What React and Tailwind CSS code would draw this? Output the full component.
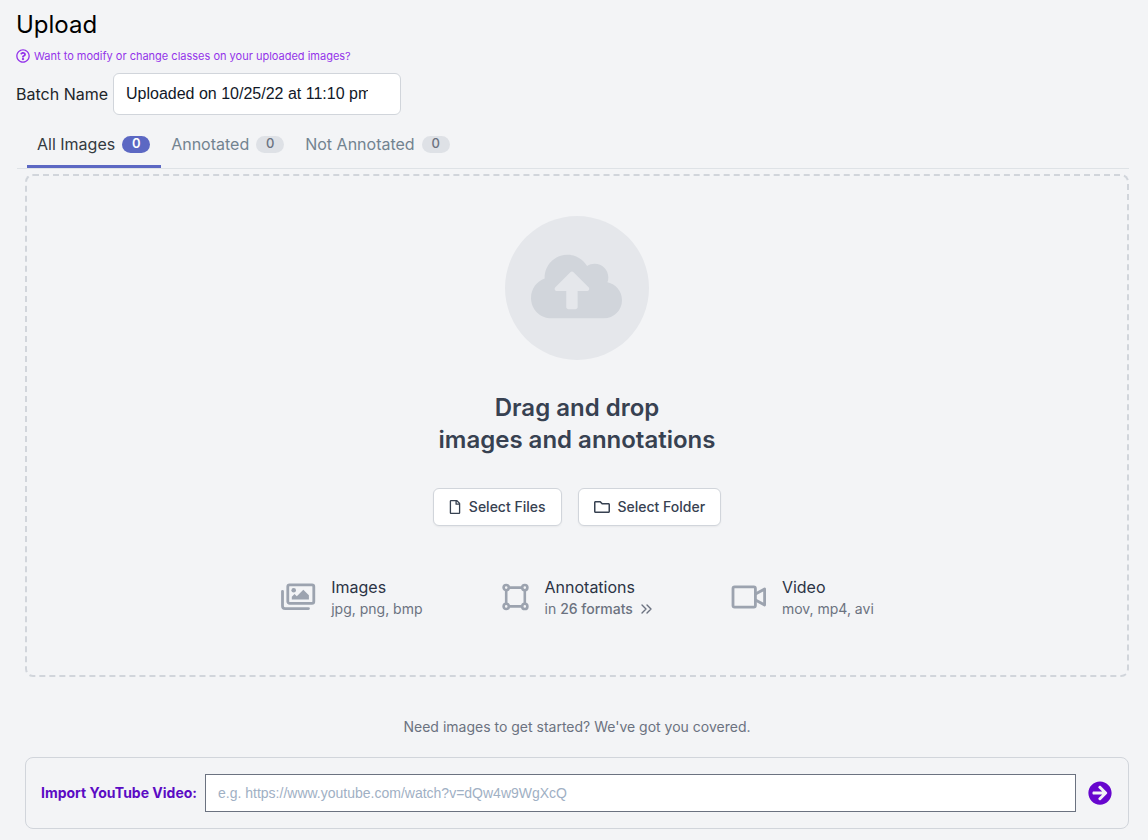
import { useState } from "react";
import { FaArrowCircleRight, FaCloudUploadAlt, FaRegFile, FaRegFolder, FaRegQuestionCircle } from "react-icons/fa";

function ImagesIcon() {
  return (
    <svg width="36" height="28" viewBox="0 0 36 28" className="shrink-0" fill="none" stroke="#9ca3af" aria-hidden="true">
      <rect x="7.8" y="1.8" width="26" height="18.6" rx="1.8" strokeWidth="2.8" />
      <path d="M2.5 8.3v14.7a2.6 2.6 0 0 0 2.6 2.6H28.5" strokeWidth="2.8" strokeLinecap="round" />
      <circle cx="13.7" cy="7.2" r="2.3" fill="#9ca3af" stroke="none" />
      <path d="M11.8 16.6v-2.8l2.7-2.7 2.3 2.2 6.5-6.5 5.6 5.4v4.4z" fill="#9ca3af" stroke="none" />
    </svg>
  );
}

function PolygonIcon() {
  return (
    <svg width="28" height="28" viewBox="0 0 28 28" className="shrink-0" fill="none" stroke="#9ca3af" strokeWidth="2.6" aria-hidden="true">
      <path d="M7 4.6h13M7 23.4h13M4.2 7v14M22.8 7v14" />
      <circle cx="4.2" cy="4.6" r="2.6" />
      <circle cx="22.8" cy="4.6" r="2.6" />
      <circle cx="4.2" cy="23.4" r="2.6" />
      <circle cx="22.8" cy="23.4" r="2.6" />
    </svg>
  );
}

function VideoIcon() {
  return (
    <svg width="36" height="24" viewBox="0 0 36 24" className="shrink-0" fill="none" stroke="#9ca3af" strokeWidth="2.8" strokeLinejoin="round" aria-hidden="true">
      <rect x="2" y="1.8" width="22.4" height="20.4" rx="1.6" />
      <path d="M24.5 9 33.6 4v16l-9.1-5" />
    </svg>
  );
}

const tabs = ["All Images", "Annotated", "Not Annotated"];

function Tabs() {
  const [active, setActive] = useState("All Images");
  return (
    <div role="tablist" className="mt-2 flex border-b border-[#dee2e6] pl-[10px]">
      {tabs.map((name) => {
        const on = name === active;
        return (
          <button
            key={name}
            type="button"
            role="tab"
            aria-selected={on}
            onClick={() => setActive(name)}
            className={`flex h-[45px] items-center gap-[7px] border-b-[3px] pr-[11px] pl-[10px] ${
              on ? "border-[#5c68c3] text-[#343a40]" : "border-transparent text-[#728390]"
            }`}
          >
            {name}
            <span
              className={`flex h-[17px] w-7 items-center justify-center rounded-full text-[13px] ${
                on ? "bg-[#5c68c3] font-semibold text-white" : "bg-[#dee1e6] font-medium text-[#6b7280]"
              }`}
            >
              0
            </span>
          </button>
        );
      })}
    </div>
  );
}

function Format({ icon, title, children }) {
  return (
    <div className="flex items-center gap-[15px]">
      {icon}
      <div>
        <div className="leading-6 text-[#2b3345]">{title}</div>
        <div className="text-sm leading-5 text-[#6b7280]">{children}</div>
      </div>
    </div>
  );
}

const selectButton =
  "flex h-[38px] items-center gap-2 rounded-md border border-[#d1d5db] bg-white px-[15px] text-sm font-medium text-[#374151] shadow-xs";

export default function App() {
  const [batch, setBatch] = useState("Uploaded on 10/25/22 at 11:10 pm");
  return (
    <main className="min-h-screen bg-[#f3f4f6] pt-[9px] pr-[19px] pb-[11px] pl-4 font-['Inter',sans-serif] text-base">
      <h1 className="text-2xl leading-8 text-black">Upload</h1>
      <a href="#classes" className="mt-[7px] flex items-center gap-1 text-[11px] leading-4 text-[#9333ea]">
        <FaRegQuestionCircle className="size-[14px]" />
        Want to modify or change classes on your uploaded images?
      </a>
      <div className="mt-[9px] flex items-center gap-[5px]">
        <label htmlFor="batch" className="text-[#212529]">Batch Name</label>
        <input
          id="batch"
          value={batch}
          onChange={(e) => setBatch(e.target.value)}
          className="h-[42px] w-72 rounded-md border border-[#d1d5db] bg-white pr-8 pl-3 font-['Liberation_Sans',sans-serif] text-[#111827]"
        />
      </div>
      <div className="pl-px">
        <Tabs />
      </div>
      <div className="pl-[9px]">
        <section className="mt-[5px] flex flex-col items-center rounded-lg border-2 border-dashed border-[#d1d5db] px-4 pt-10 pb-14">
          <div className="flex size-36 items-center justify-center rounded-full bg-[#e5e7eb] pr-0.5 pb-[3px] text-[#d1d5db]">
            <FaCloudUploadAlt className="h-[73px] w-[91px]" />
          </div>
          <h2 className="mt-8 text-center text-2xl leading-8 font-semibold text-[#374151]">
            Drag and drop
            <br />
            images and annotations
          </h2>
          <div className="mt-8 flex gap-4">
            <button type="button" className={selectButton}>
              <FaRegFile className="h-[14px] w-3" />
              Select Files
            </button>
            <button type="button" className={selectButton}>
              <FaRegFolder className="size-4" />
              Select Folder
            </button>
          </div>
          <div className="mt-[49px] flex flex-wrap justify-center gap-[79px]">
            <Format icon={<ImagesIcon />} title="Images">jpg, png, bmp</Format>
            <Format icon={<PolygonIcon />} title="Annotations">
              <a href="#formats" className="flex items-center gap-2">
                <span>in <span className="font-medium">26 formats</span></span>
                <svg width="11" height="10" viewBox="0 0 11 10" fill="none" stroke="currentColor" strokeWidth="1.4" strokeLinecap="round" strokeLinejoin="round" aria-hidden="true">
                  <path d="m1 1 4 4-4 4M6 1l4 4-4 4" />
                </svg>
              </a>
            </Format>
            <Format icon={<VideoIcon />} title="Video">mov, mp4, avi</Format>
          </div>
        </section>
        <p className="mt-10 text-center text-sm leading-5 text-[#6b7280]">
          Need images to get started? We've got you covered.
        </p>
        <form onSubmit={(e) => e.preventDefault()} className="mt-5 flex items-center rounded-lg border border-[#d1d5db] py-4 pr-4 pl-[15px]">
          <label htmlFor="video" className="text-sm font-bold text-[#5b0bc4]">Import YouTube Video:</label>
          <input
            id="video"
            placeholder="e.g. https://www.youtube.com/watch?v=dQw4w9WgXcQ"
            className="ml-2 h-[38px] min-w-0 flex-1 border border-[#6b7280] bg-white px-3 font-['Liberation_Sans',sans-serif] text-sm text-[#111827] placeholder:text-[#9fb0c4]"
          />
          <button type="submit" aria-label="Import video" className="ml-3 text-[#6706ce]">
            <FaArrowCircleRight className="size-6" />
          </button>
        </form>
      </div>
    </main>
  );
}
